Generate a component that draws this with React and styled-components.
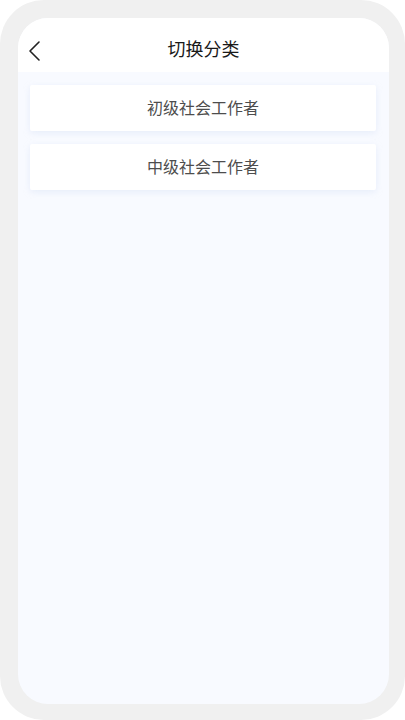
import React from 'react';
import styled, { createGlobalStyle } from 'styled-components';

const GlobalStyle = createGlobalStyle`
  html, body {
    margin: 0;
    padding: 0;
    background: #ffffff;
    font-family: "Noto Sans CJK SC", "Noto Sans", sans-serif;
  }
`;

const Frame = styled.div`
  width: 405px;
  height: 720px;
  box-sizing: border-box;
  padding: 18px 16px 16px 18px;
  background: #f0f0f0;
  border-radius: 44px;
`;

const Screen = styled.div`
  height: 100%;
  display: flex;
  flex-direction: column;
  background: #f8faff;
  border-radius: 30px;
  overflow: hidden;
`;

const Header = styled.div`
  position: relative;
  height: 54px;
  box-sizing: border-box;
  padding-top: 6px;
  flex-shrink: 0;
  display: flex;
  align-items: center;
  justify-content: center;
  background: #ffffff;
`;

const BackButton = styled.button`
  position: absolute;
  left: 8px;
  top: 22px;
  border: none;
  background: none;
  padding: 0;
  display: flex;
  cursor: pointer;
`;

const Title = styled.h1`
  margin: 0;
  font-size: 18px;
  font-weight: 400;
  color: #1a1a1a;
`;

const List = styled.div`
  display: flex;
  flex-direction: column;
  gap: 13px;
  padding: 13px 13px 0 12px;
`;

const Item = styled.div`
  height: 46px;
  box-sizing: border-box;
  padding-bottom: 3px;
  display: flex;
  align-items: center;
  justify-content: center;
  background: #ffffff;
  border-radius: 2px;
  box-shadow: 0 2px 6px rgba(200, 215, 240, 0.35);
  font-size: 16px;
  color: #4d4d4d;
`;

const categories = ['初级社会工作者', '中级社会工作者'];

const App = () => (
  <>
    <GlobalStyle />
    <Frame>
      <Screen>
        <Header>
          <BackButton aria-label="返回">
            <svg width="20" height="22" viewBox="0 0 20 22" fill="none">
              <path d="M13 2 L4 11 L13 20" stroke="#222" strokeWidth="1.6" strokeLinecap="round" strokeLinejoin="round" />
            </svg>
          </BackButton>
          <Title>切换分类</Title>
        </Header>
        <List>
          {categories.map((name) => (
            <Item key={name}>{name}</Item>
          ))}
        </List>
      </Screen>
    </Frame>
  </>
);

export default App;
